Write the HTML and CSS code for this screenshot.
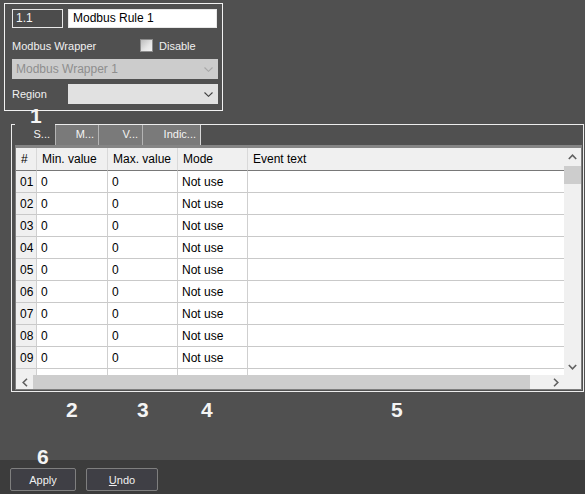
FILE: index.html
```html
<!DOCTYPE html>
<html>
<head>
<meta charset="utf-8">
<link rel="stylesheet" href="styles.css">
</head>
<body>
<div class="app">
  <section class="props">
    <div class="row1">
      <div class="field fid">1.1</div>
      <div class="field fname">Modbus Rule 1</div>
    </div>
    <div class="row2">
      <span class="lbl wlbl">Modbus Wrapper</span>
      <span class="chkbox"></span>
      <span class="lbl">Disable</span>
    </div>
    <div class="combo disabled">
      <span>Modbus Wrapper 1</span>
      <svg class="chev" width="9" height="5" viewBox="0 0 9 5"><polyline points="0.5,0.5 4.5,4.3 8.5,0.5" fill="none" stroke="#a8a8a8" stroke-width="1.1"/></svg>
    </div>
    <div class="row4">
      <span class="lbl rlbl">Region</span>
      <div class="combo region">
        <span></span>
        <svg class="chev" width="9" height="5" viewBox="0 0 9 5"><polyline points="0.5,0.5 4.5,4.3 8.5,0.5" fill="none" stroke="#404040" stroke-width="1.1"/></svg>
      </div>
    </div>
  </section>

  <section class="group">
    <div class="tabstrip">
      <div class="stub"></div>
      <div class="tab active">S...</div>
      <div class="tabrest">
        <div class="tab t-m">M...</div>
        <div class="tab t-v">V...</div>
        <div class="tab t-i">Indic...</div>
      </div>
    </div>
    <div class="page">
      <div class="gridwrap">
        <div class="grid">
          <div class="row head">
            <div class="cell">#</div>
            <div class="cell">Min. value</div>
            <div class="cell">Max. value</div>
            <div class="cell">Mode</div>
            <div class="cell last">Event text</div>
          </div>
          <div class="row"><div class="cell num">01</div><div class="cell">0</div><div class="cell">0</div><div class="cell">Not use</div><div class="cell last"></div></div>
          <div class="row"><div class="cell num">02</div><div class="cell">0</div><div class="cell">0</div><div class="cell">Not use</div><div class="cell last"></div></div>
          <div class="row"><div class="cell num">03</div><div class="cell">0</div><div class="cell">0</div><div class="cell">Not use</div><div class="cell last"></div></div>
          <div class="row"><div class="cell num">04</div><div class="cell">0</div><div class="cell">0</div><div class="cell">Not use</div><div class="cell last"></div></div>
          <div class="row"><div class="cell num">05</div><div class="cell">0</div><div class="cell">0</div><div class="cell">Not use</div><div class="cell last"></div></div>
          <div class="row"><div class="cell num">06</div><div class="cell">0</div><div class="cell">0</div><div class="cell">Not use</div><div class="cell last"></div></div>
          <div class="row"><div class="cell num">07</div><div class="cell">0</div><div class="cell">0</div><div class="cell">Not use</div><div class="cell last"></div></div>
          <div class="row"><div class="cell num">08</div><div class="cell">0</div><div class="cell">0</div><div class="cell">Not use</div><div class="cell last"></div></div>
          <div class="row"><div class="cell num">09</div><div class="cell">0</div><div class="cell">0</div><div class="cell">Not use</div><div class="cell last"></div></div>
          <div class="row"><div class="cell num"></div><div class="cell"></div><div class="cell"></div><div class="cell"></div><div class="cell last"></div></div>
        </div>
        <div class="vscroll">
          <div class="sbtn">
            <svg width="9" height="6" viewBox="0 0 9 6"><polyline points="0.8,5 4.5,1.2 8.2,5" fill="none" stroke="#606060" stroke-width="1.6"/></svg>
          </div>
          <div class="vthumb"></div>
          <div class="vtrack"></div>
          <div class="sbtn">
            <svg width="9" height="6" viewBox="0 0 9 6"><polyline points="0.8,1 4.5,4.8 8.2,1" fill="none" stroke="#606060" stroke-width="1.6"/></svg>
          </div>
        </div>
      </div>
      <div class="hrow">
        <div class="hscroll">
          <div class="hbtn">
            <svg width="6" height="9" viewBox="0 0 6 9"><polyline points="5,0.8 1.2,4.5 5,8.2" fill="none" stroke="#606060" stroke-width="1.6"/></svg>
          </div>
          <div class="hthumb"></div>
          <div class="htrack"></div>
          <div class="hbtn">
            <svg width="6" height="9" viewBox="0 0 6 9"><polyline points="1,0.8 4.8,4.5 1,8.2" fill="none" stroke="#606060" stroke-width="1.6"/></svg>
          </div>
        </div>
        <div class="corner"></div>
      </div>
    </div>
  </section>

  <footer class="bottombar">
    <button class="btn b-apply">Apply</button>
    <button class="btn b-undo"><u>U</u>ndo</button>
  </footer>

  <span class="callout c1">1</span>
  <span class="callout c2">2</span>
  <span class="callout c3">3</span>
  <span class="callout c4">4</span>
  <span class="callout c5">5</span>
  <span class="callout c6">6</span>
</div>
</body>
</html>
```

FILE: styles.css
```css
* { box-sizing: border-box; }
html, body { margin: 0; padding: 0; }
body {
  width: 585px;
  height: 494px;
  overflow: hidden;
  background: #505050;
  font-family: "Liberation Sans", Arial, sans-serif;
  color: #f0f0f0;
}
.app {
  position: relative;
  width: 585px;
  height: 494px;
  display: flex;
  flex-direction: column;
}

/* ---------- properties panel ---------- */
.props {
  margin: 3px 0 0 4px;
  width: 219px;
  height: 108px;
  border: 1px solid #f2f2f2;
  padding: 5px 4px 0 7px;
  font-size: 11px;
}
.row1 {
  display: flex;
  gap: 5px;
  height: 19px;
}
.field {
  height: 19px;
  line-height: 17px;
  padding-left: 3px;
  border: 1px solid #e8e8e8;
  font-size: 12px;
}
.fid { width: 51px; background: #4c4c4c; color: #f4f4f4; }
.fname { width: 149px; background: #ffffff; color: #000; padding-left: 4px; }
.row2 {
  display: flex;
  align-items: center;
  height: 13px;
  margin-top: 11px;
}
.lbl { color: #f0f0f0; white-space: nowrap; }
.wlbl { flex: 0 0 128px; }
.chkbox {
  width: 13px;
  height: 13px;
  margin-right: 6px;
  background: linear-gradient(135deg, #bdbdbd 0%, #e6e6e6 60%, #f2f2f2 100%);
  border: 1px solid #8c8c8c;
}
.combo {
  display: flex;
  align-items: center;
  justify-content: space-between;
  height: 20px;
  padding: 0 5px 0 4px;
}
.combo.disabled {
  margin-top: 7px;
  width: 206px;
  background: #cccccc;
  color: #8e8e8e;
  font-size: 12px;
}
.row4 {
  display: flex;
  align-items: center;
  height: 20px;
  margin-top: 5px;
}
.rlbl { flex: 0 0 56px; }
.combo.region {
  width: 150px;
  background: #e1e1e1;
}

/* ---------- group box with tabs ---------- */
.group {
  margin: 13px 0 0 11px;
  width: 573px;
  height: 268px;
  border-left: 1px solid #ececec;
  border-right: 1px solid #ececec;
  border-bottom: 1px solid #ececec;
  display: flex;
  flex-direction: column;
}
.tabstrip {
  display: flex;
  height: 21px;
}
.stub {
  width: 3px;
  border-top: 1px solid #ececec;
}
.tab {
  height: 20px;
  line-height: 19px;
  text-align: right;
  padding-right: 4px;
  font-size: 11px;
  color: #f4f4f4;
  white-space: nowrap;
}
.tab.active {
  width: 40px;
  height: 21px;
  padding-right: 5px;
  line-height: 20px;
}
.tabrest {
  flex: 1;
  display: flex;
  border-top: 1px solid #ececec;
}
.tabrest .tab {
  background: #7a7a7a;
  border-left: 1px solid #b4b4b4;
}
.t-m { width: 43px; }
.t-v { width: 44px; }
.t-i { width: 59px; border-right: 1px solid #d8d8d8; }

.page {
  margin-left: 3px;
  width: 567px;
  height: 245px;
  border: 1px solid #7e7e7e;
  border-top: 3px solid #858585;
  display: flex;
  flex-direction: column;
}
.gridwrap {
  display: flex;
  height: 227px;
}
.grid {
  width: 548px;
  height: 227px;
  overflow: hidden;
  background: #ffffff;
}
.row {
  display: grid;
  grid-template-columns: 21px 71px 70px 70px 316px;
  height: 22px;
}
.cell {
  border-right: 1px solid #cfcfcf;
  border-bottom: 1px solid #c9c9c9;
  padding-left: 4px;
  padding-top: 1px;
  line-height: 20px;
  font-size: 12px;
  color: #000;
  white-space: nowrap;
  overflow: hidden;
}
.cell.last { border-right: none; }
.cell.num {
  background: #f0f0f0;
  padding-left: 4px;
}
.row.head { height: 23px; }
.head .cell {
  background: #f0f0f0;
  border-right: 1px solid #d9d9d9;
  border-bottom: 1px solid #787878;
  line-height: 21px;
  padding-left: 5px;
}
.head .cell.last { border-right: none; }

.vscroll {
  width: 17px;
  height: 227px;
  background: #f0f0f0;
  display: flex;
  flex-direction: column;
}
.sbtn {
  height: 17px;
  display: flex;
  align-items: center;
  justify-content: center;
}
.vthumb {
  height: 18px;
  margin-top: 1px;
  background: #cdcdcd;
}
.vtrack { flex: 1; }

.hrow {
  display: flex;
  height: 14px;
}
.hscroll {
  width: 548px;
  height: 14px;
  background: #f0f0f0;
  display: flex;
}
.hbtn {
  width: 17px;
  display: flex;
  align-items: center;
  justify-content: center;
}
.hthumb {
  width: 497px;
  background: #cdcdcd;
}
.htrack { flex: 1; }
.corner {
  width: 17px;
  background: #f0f0f0;
}

/* ---------- bottom bar ---------- */
.bottombar {
  margin-top: auto;
  height: 34px;
  background: #3c3c3c;
  display: flex;
  gap: 10px;
  padding: 8px 10px 0;
}
.btn {
  height: 23px;
  background: #3f3f45;
  border: 1px solid #7f7f7f;
  border-radius: 2px;
  color: #f0f0f0;
  font-family: "Liberation Sans", Arial, sans-serif;
  font-size: 11px;
  padding: 0;
}
.b-apply { width: 66px; }
.b-undo { width: 72px; }

/* ---------- annotation callouts ---------- */
.callout {
  position: absolute;
  font-family: "Liberation Sans", Arial, sans-serif;
  font-weight: bold;
  font-size: 21px;
  line-height: 21px;
  color: #f4f4f4;
}
.c1 { left: 30px; top: 105px; }
.c2 { left: 66px; top: 399px; }
.c3 { left: 137px; top: 399px; }
.c4 { left: 201px; top: 399px; }
.c5 { left: 391px; top: 399px; }
.c6 { left: 37px; top: 446px; }
```
